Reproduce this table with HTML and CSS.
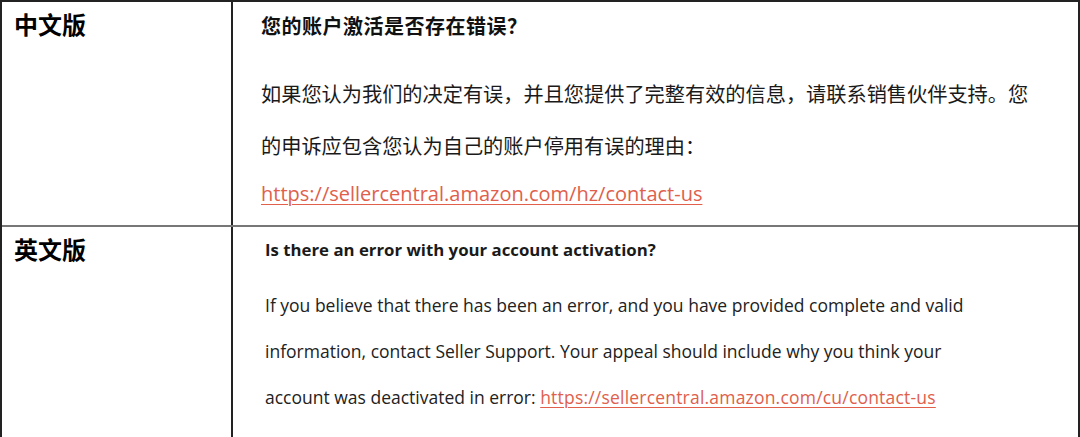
FILE: index.html
```html
<!DOCTYPE html>
<html lang="zh">
<head>
<meta charset="utf-8">
<link rel="stylesheet" href="styles.css">
</head>
<body>
<div class="table">
  <div class="row row-zh">
    <div class="label">中文版</div>
    <div class="content">
      <h2 class="zh-title">您的账户激活是否存在错误？</h2>
      <p class="zh-body">如果您认为我们的决定有误，并且您提供了完整有效的信息，请联系销售伙伴支持。您的申诉应包含您认为自己的账户停用有误的理由：</p>
      <p class="zh-link"><a href="#">https://sellercentral.amazon.com/hz/contact-us</a></p>
    </div>
  </div>
  <div class="row row-en">
    <div class="label">英文版</div>
    <div class="content">
      <h2 class="en-title">Is there an error with your account activation?</h2>
      <p class="en-body">If you believe that there has been an error, and you have provided complete and valid information, contact Seller Support. Your appeal should include why you think your account was deactivated in error: <a href="#">https://sellercentral.amazon.com/cu/contact-us</a></p>
    </div>
  </div>
</div>
</body>
</html>
```

FILE: styles.css
```css
html, body {
  margin: 0;
  padding: 0;
  background: #ffffff;
}
body {
  width: 1080px;
  height: 437px;
  overflow: hidden;
  font-family: "Open Sans", "Noto Sans CJK SC", sans-serif;
  color: #1a1a1a;
}
.table {
  box-sizing: border-box;
  width: 1080px;
  border-top: 2px solid #222;
  border-left: 2px solid #222;
  border-right: 2px solid #222;
}
.row {
  display: grid;
  grid-template-columns: 231px 1fr;
}
.row-zh {
  height: 223px;
  border-bottom: 2px solid #777;
}
.row-en {
  height: 220px;
}
.label {
  border-right: 2px solid #222;
  padding: 6px 0 0 12px;
  font-family: "Noto Sans CJK SC", sans-serif;
  font-weight: 700;
  font-size: 24px;
  line-height: 32px;
  color: #000;
}
.content {
  padding-left: 28px;
}
.row-zh .content {
  padding-top: 10px;
}
.zh-title {
  margin: 0;
  font-family: "Noto Sans CJK SC", sans-serif;
  font-weight: 700;
  font-size: 20px;
  line-height: 28px;
  letter-spacing: 0.5px;
  color: #111;
}
.zh-body {
  margin: 28px 0 0;
  width: 780px;
  font-family: "Noto Sans CJK SC", sans-serif;
  font-size: 20.2px;
  line-height: 52px;
  color: #1a1a1a;
}
.zh-link {
  margin: 0;
  font-family: "Open Sans", sans-serif;
  font-size: 20px;
  line-height: 44px;
}
a {
  color: #e0604c;
  text-decoration: underline;
  text-decoration-thickness: 1px;
  text-underline-offset: 3px;
}
.row-en .content {
  padding-top: 10px;
  padding-left: 32px;
}
.en-title {
  margin: 0;
  font-family: "Open Sans", sans-serif;
  font-weight: 700;
  font-size: 16.8px;
  line-height: 26px;
  color: #1a1a1a;
}
.en-body {
  margin: 19px 0 0;
  width: 725px;
  font-family: "Open Sans", sans-serif;
  font-size: 17.5px;
  line-height: 46px;
  color: #222;
}
.en-body a {
  letter-spacing: 0.2px;
}
```
